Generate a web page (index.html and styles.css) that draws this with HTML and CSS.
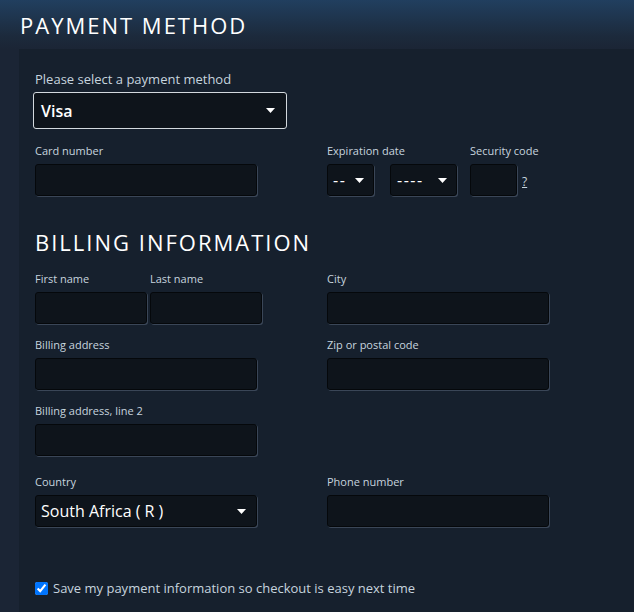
FILE: index.html
```html
<!DOCTYPE html>
<html lang="en">
<head>
<meta charset="utf-8">
<title>Payment method</title>
<link rel="stylesheet" href="styles.css">
</head>
<body>
<header class="page-head">
  <h1 class="page-title">PAYMENT METHOD</h1>
</header>
<main class="panel">
  <div class="field method-field">
    <div class="label label-lg">Please select a payment method</div>
    <div class="select select-method">
      <span class="select-value value-strong">Visa</span>
      <svg class="caret" width="9" height="5" viewBox="0 0 9 5"><polygon points="0,0 9,0 4.5,5" fill="#fff"/></svg>
    </div>
  </div>

  <div class="grid card-grid">
    <div class="field">
      <div class="label">Card number</div>
      <div class="input input-wide"></div>
    </div>
    <div class="card-extra">
      <div class="field expiry-field">
        <div class="label">Expiration date</div>
        <div class="pair">
          <div class="select select-month">
            <span class="select-value value-dash">--</span>
            <svg class="caret" width="9" height="5" viewBox="0 0 9 5"><polygon points="0,0 9,0 4.5,5" fill="#fff"/></svg>
          </div>
          <div class="select select-year">
            <span class="select-value value-dash">----</span>
            <svg class="caret" width="9" height="5" viewBox="0 0 9 5"><polygon points="0,0 9,0 4.5,5" fill="#fff"/></svg>
          </div>
        </div>
      </div>
      <div class="field">
        <div class="label">Security code</div>
        <div class="pair cvv-pair">
          <div class="input input-cvv"></div>
          <a class="help-link" href="#">?</a>
        </div>
      </div>
    </div>
  </div>

  <h2 class="section-title">BILLING INFORMATION</h2>

  <div class="grid billing-grid">
    <div class="name-row">
      <div class="field">
        <div class="label">First name</div>
        <div class="input input-half"></div>
      </div>
      <div class="field">
        <div class="label">Last name</div>
        <div class="input input-half"></div>
      </div>
    </div>
    <div class="field">
      <div class="label">City</div>
      <div class="input input-wide"></div>
    </div>

    <div class="field">
      <div class="label">Billing address</div>
      <div class="input input-wide"></div>
    </div>
    <div class="field">
      <div class="label">Zip or postal code</div>
      <div class="input input-wide"></div>
    </div>

    <div class="field">
      <div class="label">Billing address, line 2</div>
      <div class="input input-wide"></div>
    </div>
    <div></div>

    <div class="field country-field">
      <div class="label">Country</div>
      <div class="select select-country">
        <span class="select-value">South Africa ( R )</span>
        <svg class="caret" width="9" height="5" viewBox="0 0 9 5"><polygon points="0,0 9,0 4.5,5" fill="#fff"/></svg>
      </div>
    </div>
    <div class="field country-field">
      <div class="label">Phone number</div>
      <div class="input input-wide"></div>
    </div>
  </div>

  <label class="save-row">
    <input type="checkbox" class="save-check" checked>
    <span>Save my payment information so checkout is easy next time</span>
  </label>
</main>
</body>
</html>
```

FILE: styles.css
```css
html, body {
  margin: 0;
  padding: 0;
}

body {
  min-height: 612px;
  background: linear-gradient(to bottom, #213f5f 0px, #1c2a3c 36px, #1b2535 49px) no-repeat, #1b2535;
  font-family: "Open Sans", "Noto Sans", sans-serif;
  color: #c6d4df;
  overflow: hidden;
}

.page-head {
  height: 49px;
  padding-left: 20px;
  box-sizing: border-box;
  padding-top: 12px;
}

.page-title,
.section-title {
  margin: 0;
  font-size: 22px;
  line-height: 26px;
  font-weight: 400;
  letter-spacing: 2px;
  color: #ffffff;
}

.panel {
  display: block;
  margin-left: 19px;
  background: #16202d;
  padding: 22px 16px 40px 16px;
  min-height: 600px;
  box-sizing: border-box;
}

.field {
  display: flex;
  flex-direction: column;
}

.label {
  font-size: 11px;
  line-height: 16px;
  margin-bottom: 5px;
  color: #c6d4df;
}

.label-lg {
  font-size: 13px;
}

.input,
.select {
  box-sizing: border-box;
  height: 32px;
  background: #0e141b;
  border: 1px solid #05080b;
  border-radius: 3px;
  box-shadow: 1px 1px 0 #3a4657;
}

.input-wide { width: 222px; }
.input-half { width: 112px; }
.input-cvv { width: 47px; }

.select {
  display: flex;
  align-items: center;
  justify-content: space-between;
  padding: 0 9px 0 5px;
  color: #ffffff;
}

.select-value {
  font-size: 16px;
  line-height: 20px;
  white-space: nowrap;
}

.value-strong { font-weight: 600; }

.value-dash {
  font-size: 16px;
  letter-spacing: 1.5px;
}

.caret { flex: none; }

.select-method {
  width: 254px;
  height: 37px;
  margin-left: -2px;
  border: 1px solid #d3d9de;
  box-shadow: none;
  padding: 0 11px 0 7px;
}

.select-month { width: 47px; }
.select-year { width: 67px; padding-left: 6px; }
.select-country { width: 222px; padding-right: 10px; }

.grid {
  display: grid;
  grid-template-columns: 292px 1fr;
}

.card-grid {
  margin-top: 14px;
}

.card-extra {
  display: flex;
  gap: 13px;
}

.expiry-field { width: 130px; }

.pair {
  display: flex;
  gap: 16px;
  align-items: center;
}

.cvv-pair { gap: 5px; }

.help-link {
  font-size: 12px;
  line-height: 16px;
  color: #c6d4df;
  text-decoration: underline;
  padding-top: 4px;
}

.section-title {
  margin-top: 33px;
  margin-bottom: 16px;
}

.billing-grid {
  row-gap: 13px;
}

.name-row {
  display: flex;
  gap: 3px;
}

.country-field {
  margin-top: 5px;
}

.save-row {
  display: flex;
  align-items: center;
  margin-top: 52px;
  font-size: 13px;
  line-height: 18px;
  color: #c6d4df;
}

.save-check {
  width: 13px;
  height: 13px;
  margin: 0 5px 0 0;
}
```
